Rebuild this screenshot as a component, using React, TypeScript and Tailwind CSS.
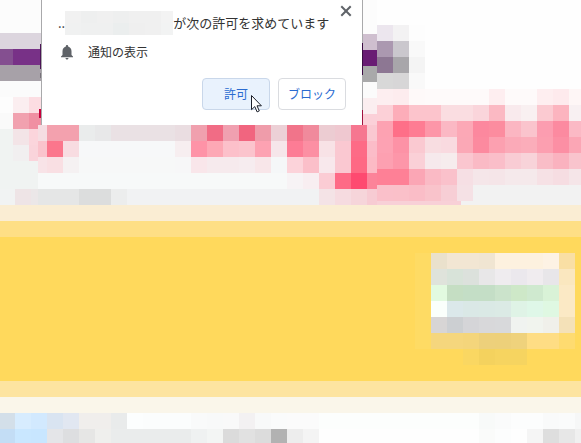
import { X } from 'lucide-react'

const TILE = 16

type Run = { x: number; y: number; colors: string[]; w?: number; h?: number }

const run = (x: number, y: number, colors: string, w = TILE, h = TILE): Run => ({
  x,
  y,
  colors: colors.split(' '),
  w,
  h,
})

const heroTiles: Run[] = [
  // Left edge
  run(0, 0, 'fcfcfc', 41, 33),
  run(0, 33, 'dcd5de', 41),
  run(0, 49, '844f90', 13),
  run(13, 49, '783187', 28),
  run(0, 65, 'a7a1a8', 41),
  run(0, 81, 'fbfbfb', 41),
  run(0, 97, 'fdfdfd', 13),
  run(13, 97, 'fbeef0 fcdde2'),
  run(0, 113, 'fafafa', 13),
  run(13, 113, 'f1a1af f08fa2'),
  run(0, 129, 'f0f3f2', 41, 60),
  run(13, 129, 'f3e4e7 fbd5dc'),
  run(13, 145, 'f1eff0 fad4db'),
  run(0, 189, 'f1f3f3', 15),
  run(15, 189, 'eee4e6 ebe7e8'),

  // Below the dialog
  run(38, 125, 'f5dde2', 9),
  run(47, 125, 'f3a1ae f3a1ae eaecec e8e8e9 eae1e4 eae1e4 eae1e4 eae1e4 eadde1 f0a0ae f16c85 f0a0b0 f1657f ef9caa ecd0d6 f1748a f08a9c ecccd2 efc8d0 f67790 fac8d1'),
  run(38, 141, 'fac3cc', 9),
  run(47, 141, 'fb768c f8dce1 f7f8f9 f7f8f9 f7f8f9 f7f8f9 f7f8f9 f7f8f9 f7eef0 fe93a7 fda8b5 fcc0ca fbc4cd fda2b2 f6e6ea fd7c95 fc8fa3 f8e2e6 fac8d1 fd6b86 fbbcc8'),
  run(38, 157, 'f8e3e7', 9),
  run(47, 157, 'f9dfe3 f5f1f2 f7f8f8 f7f8f8 f7f8f8 f7f8f8 f7f8f8 f7f8f8 f7f7f8 f9e6ea f6eaed f6eaed f6ecef f8e6e9 f5f7f8 fcd3da fbbfc9 f8e8ec fac8d1 fe6984 fcbac5'),
  run(38, 173, 'f7f9f9', 249),
  run(287, 173, 'f7f3f5 f8eef1 fbccd4 fe6a86 fe4a70 fc8399'),
  run(38, 189, 'e5e6e6', 41),
  run(79, 189, 'dcdddd dcdddd eceded'),
  run(127, 189, 'f1f2f3', 192),
  run(319, 189, 'f4e3e6 f6dbe0 f6d5da f7cbd3'),

  // Right of the dialog
  run(362, 0, 'fcfcfc', 15, 34),
  run(362, 34, 'cfbfcf', 15),
  run(362, 50, '691c74', 15),
  run(362, 66, 'a9a9aa', 15),
  run(362, 82, 'fbfbfb', 15),
  run(362, 98, 'fbeef0', 15),
  run(362, 114, 'fbd0d8', 15, 11),
  run(377, 25, 'ece6ee f3f2f3 fdfdfd'),
  run(377, 41, 'ab98b0 cac7cd f9f9f9'),
  run(377, 57, '8d7793 a8a6aa f4f4f4'),
  run(377, 73, 'd8d8d8 d7d6d7 f9f9f9'),
  run(377, 89, 'fdeef0 fdecee fef9f9 fefafa fefafa fefafa fefafa feeef0 fefafa fefafa feeef0 feeaed fef6f6'),
  run(377, 105, 'fcd0d7 fdadb9 fcc4cc fcc4cc fadde1 fadde1 fad5db fbb9c3 f9eaed f9f0f1 fbcad1 fcb4bf f8f0f2'),
  run(377, 121, 'fda2b2 fe6f88 fe7c93 fd96a8 fbb8c4 fca8b6 fc889e fc8c9f fbb6c2 fac4cd fc9db0 fc8aa0 fbb9c5'),
  run(377, 137, 'fda2b3 fd92a6 fac9d1 f8dde1 f9dae0 fba8b6 fc8a9f fca0b0 fbaab8 fbadba fc9fb0 fc8fa4 fba6b5'),
  run(377, 153, 'fda0b1 fd96a9 fad0d7 f6e9ec f6eced fac6cf fabac5 fabec9 f9ccd4 f8d3d9 f9bdc7 fab2bf f9c4cd'),
  run(377, 169, 'fe8096 fe8096 fba6b5 fabac5 fac1cb f6dfe4 f5e6e9 f5e5e8 f5e9eb f5e9eb f6e1e5 f6dde2 f5e5e8'),
  run(377, 185, 'fac0ca fac0c9 fabdc7 f9c3cb f7ced5 f5e1e5'),
  run(473, 185, 'f2f2f2', 108, 20),
  run(377, 201, 'f8d0d7', 84, 4),
  run(461, 201, 'f2f2f2', 12, 4),

  // Slivers showing along the dialog's edges
  run(40, 44, '4b1456', 2, 25),
  run(40, 73, '77727a', 2, 5),
  run(39, 109, 'c8003c', 3, 9),
  run(362, 0, 'a9a9ab', 1, 125),
  run(362, 43, '3a0b42', 1, 32),
  run(362, 110, 'a01240', 1, 15),
]

const cardTiles: Run[] = [
  run(0, 0, 'fedb64', 16, 96),
  run(16, 0, 'eae1cc f2e6d3 f2e6d3 f0e5d2 fdf1df fdf1df fdf1df fdf2e4 f9dfa4'),
  run(16, 16, 'dfe3db d8e3d9 dce1dc e8e7e8 efecef ebe8ed f0ecef e8e6e9 fae7bf'),
  run(16, 32, 'e2fae0 c5dec3 c4dec6 c4dec6 cbe3cb cee8c8 cfe9cf d9f2d7 fbe9c5'),
  run(16, 48, 'fafffb dbe8ea dae8e6 dae9e5 dbeae5 dff3e6 dff7e8 dff8e2 fbe9c5'),
  run(16, 64, 'd7d5d5 cccfd2 d5d5d8 d8d8da d8d9db f0f3f0 f1f4ee f0f0ea f4e1b8'),
  run(16, 80, 'f5d67d f5d67d f4d57b edd07b edd07a efd27c fedd84 fedd84 fedb70'),
  run(48, 96, 'fad762 f4d25e f6d460 f6d460'),
]

const footerTiles: Run[] = [
  run(0, 0, 'd3dfe9', 15),
  run(15, 0, 'd7ecfe d2e9fe d9e4f1 e1e7f1 f0eeec f0eeec e9ebeb fcfefe fbfdfd fbfdfd fbfdfd f9fafa f8f9f9 f9f9f9 f3f1f2 f8f9f9 fafbfb fbfbfb fbfbfb'),
  run(319, 0, 'fcfefd', 160),
  run(479, 0, 'f8faf9 fafbfb fcfdfd fcfdfd f9fafa fafbfb f6f7f7'),
  run(0, 16, 'c3ddf5', 15),
  run(15, 16, 'c9e7ff c8e6ff e4e5e8 dddee0 e6e6e5 efefed'),
  run(111, 16, 'eaecec', 80),
  run(191, 16, 'eff1f1 f3f5f4 dbdbdb e1e1e1 dcdcdc b2b2b2 ededed f4f4f4'),
  run(479, 16, 'fafbfa fcfdfd fefefe f5f5f5 dedede e7e7e7 f0f0f0'),
]

// Censored part of the site address in the dialog title
const addressTiles: Run[] = [
  run(0, 0, 'f1f1f1 eeefef f0f0f0 eeefef f0f0f0 f0f0f0 f3f3f3', 16, 12),
  run(0, 12, 'f0f1f1 eff0f0 eff0f0 ebeeee efefef f0f0f0 f2f3f3', 16, 12),
]

function Mosaic({ tiles, width, height }: { tiles: Run[]; width: number; height: number }) {
  return (
    <svg
      width={width}
      height={height}
      shapeRendering="crispEdges"
      className="block shrink-0"
      aria-hidden="true"
    >
      {tiles.map(({ x, y, colors, w = TILE, h = TILE }) =>
        colors.map((color, i) => (
          <rect key={`${x}-${y}-${i}-${w}`} x={x + i * w} y={y} width={w} height={h} fill={`#${color}`} />
        ))
      )}
    </svg>
  )
}

function BellIcon() {
  return (
    <svg width="18" height="18" viewBox="0 0 24 24" fill="#5f6368" aria-hidden="true">
      <path d="M12 22c1.1 0 2-.9 2-2h-4c0 1.1.89 2 2 2zm6-6v-5c0-3.07-1.64-5.64-4.5-6.32V4c0-.83-.67-1.5-1.5-1.5s-1.5.67-1.5 1.5v.68C7.63 5.36 6 7.92 6 11v5l-2 2v1h16v-1l-2-2z" />
    </svg>
  )
}

function Cursor() {
  return (
    <svg
      width="13"
      height="20"
      viewBox="0 0 13 20"
      className="pointer-events-none absolute top-4 left-12"
      aria-hidden="true"
    >
      <path
        d="M1.5 1.5v14.2l3.3-3.1 2.3 5.3 2.2-1-2.3-5.1h4.4z"
        fill="#fff"
        stroke="#1b1f2a"
        strokeWidth="1"
      />
    </svg>
  )
}

function PermissionDialog() {
  return (
    <div
      role="dialog"
      aria-labelledby="permission-title"
      className="absolute top-0 left-[41px] w-[321px] border-l border-[#a9a9ab] bg-white pt-[11px] pr-4 pb-[15px] pl-4 text-[#333]"
    >
      <button
        type="button"
        aria-label="閉じる"
        className="absolute top-[3px] right-2 flex size-4 items-center justify-center text-[#5f6368]"
      >
        <X size={16} strokeWidth={3} strokeLinecap="square" className="shrink-0" />
      </button>
      <h1 id="permission-title" className="flex h-6 items-center text-[13px] whitespace-nowrap">
        <span>..</span>
        <Mosaic tiles={addressTiles} width={108} height={24} />
        <span>が次の許可を求めています</span>
      </h1>
      <div className="mt-2 flex h-[18px] items-center gap-3 text-xs">
        <BellIcon />
        <span>通知の表示</span>
      </div>
      <div className="mt-[17px] flex justify-end gap-2 text-xs text-[#2a6bd0]">
        <div className="relative">
          <button
            type="button"
            className="h-8 w-[68px] rounded border border-[#c9d7ea] bg-[#e9f2fd]"
          >
            許可
          </button>
          <Cursor />
        </div>
        <button type="button" className="h-8 w-[68px] rounded border border-[#dadce0] bg-white">
          ブロック
        </button>
      </div>
    </div>
  )
}

export default function App() {
  return (
    <main className="relative w-full overflow-hidden bg-[#fefefe] font-['Noto_Sans_CJK_JP',sans-serif]">
      <section className="overflow-hidden">
        <Mosaic tiles={heroTiles} width={581} height={205} />
      </section>

      {/* Yellow banner */}
      <div className="h-4 bg-[#faedd3]" />
      <div className="h-4 bg-[#fedf85]" />
      <section className="flex justify-end bg-[#ffd95c] pt-4 pr-1.5 pb-4">
        <Mosaic tiles={cardTiles} width={160} height={112} />
      </section>
      <div className="h-4 bg-[#fde4a0]" />
      <div className="h-4 bg-[#faf6ea]" />

      <footer className="overflow-hidden">
        <Mosaic tiles={footerTiles} width={581} height={30} />
      </footer>

      <PermissionDialog />
    </main>
  )
}
